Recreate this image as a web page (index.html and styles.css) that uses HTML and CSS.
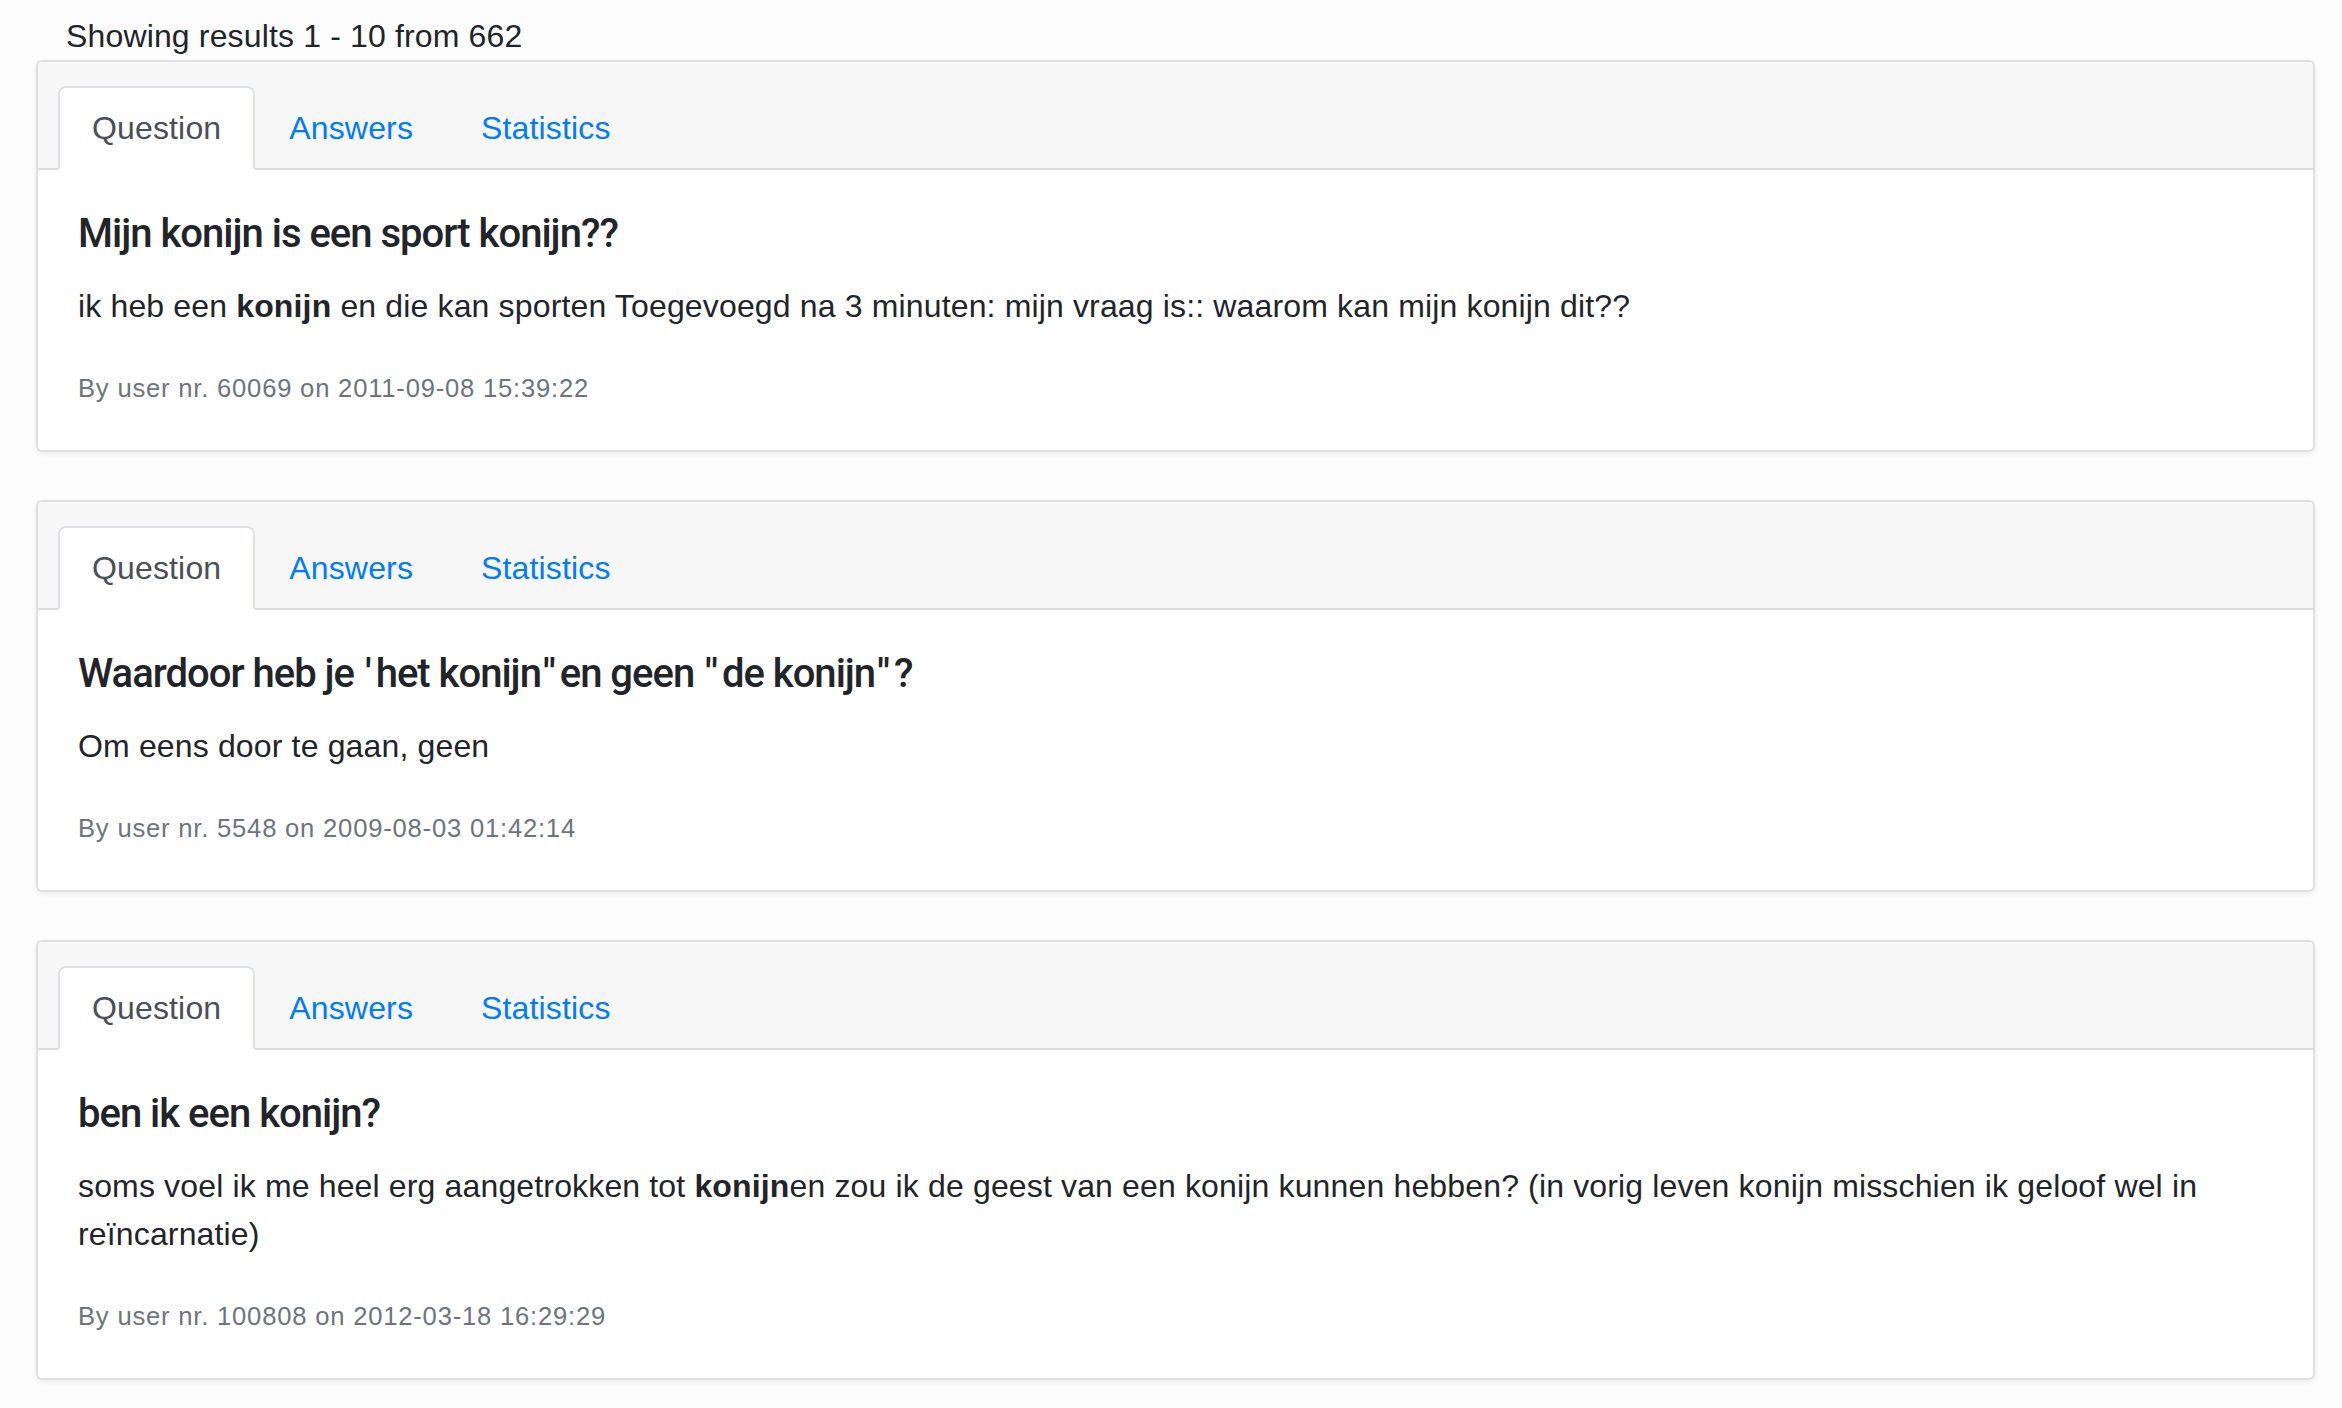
FILE: index.html
```html
<!DOCTYPE html>
<html lang="nl">
<head>
<meta charset="utf-8">
<title>Results</title>
<link rel="stylesheet" href="styles.css">
</head>
<body>
<div class="page">
  <p class="summary">Showing results 1 - 10 from 662</p>

  <div class="card">
    <div class="card-header">
      <ul class="tabs">
        <li><a class="tab active">Question</a></li>
        <li><a class="tab">Answers</a></li>
        <li><a class="tab">Statistics</a></li>
      </ul>
    </div>
    <div class="card-body">
      <h5 class="card-title">Mijn konijn is een sport konijn??</h5>
      <p class="card-text">ik heb een <b>konijn</b> en die kan sporten Toegevoegd na 3 minuten: mijn vraag is:: waarom kan mijn konijn dit??</p>
      <p class="meta"><small>By user nr. 60069 on 2011-09-08 15:39:22</small></p>
    </div>
  </div>

  <div class="card">
    <div class="card-header">
      <ul class="tabs">
        <li><a class="tab active">Question</a></li>
        <li><a class="tab">Answers</a></li>
        <li><a class="tab">Statistics</a></li>
      </ul>
    </div>
    <div class="card-body">
      <h5 class="card-title">Waardoor heb je <span class="q">'</span>het konijn<span class="q">''</span>en geen <span class="q">''</span>de konijn<span class="q">''</span>?</h5>
      <p class="card-text">Om eens door te gaan, geen</p>
      <p class="meta"><small>By user nr. 5548 on 2009-08-03 01:42:14</small></p>
    </div>
  </div>

  <div class="card">
    <div class="card-header">
      <ul class="tabs">
        <li><a class="tab active">Question</a></li>
        <li><a class="tab">Answers</a></li>
        <li><a class="tab">Statistics</a></li>
      </ul>
    </div>
    <div class="card-body">
      <h5 class="card-title">ben ik een konijn?</h5>
      <p class="card-text">soms voel ik me heel erg aangetrokken tot <b>konijn</b>en zou ik de geest van een konijn kunnen hebben? (in vorig leven konijn misschien ik geloof wel in reïncarnatie)</p>
      <p class="meta"><small>By user nr. 100808 on 2012-03-18 16:29:29</small></p>
    </div>
  </div>
</div>
</body>
</html>
```

FILE: styles.css
```css
html, body {
  margin: 0;
  padding: 0;
  background: #fdfdfd;
}

body {
  font-family: "Liberation Sans", Arial, sans-serif;
  font-size: 32px;
  line-height: 48px;
  letter-spacing: 0.15px;
  color: #212529;
}

.page {
  padding: 12px 27px 0 36px;
}

.summary {
  margin: 0 0 0 30px;
  color: #212529;
}

.card {
  background: #fff;
  border: 2px solid #dedede;
  border-radius: 6px;
  box-shadow: 0 2px 6px rgba(0, 0, 0, 0.08);
  margin-bottom: 48px;
  overflow: hidden;
}

.card-header {
  background: #f7f7f7;
  border-bottom: 2px solid #dcdcdc;
  padding: 24px 40px 0 20px;
}

.tabs {
  display: flex;
  list-style: none;
  margin: 0 0 -2px 0;
  padding: 0;
}

.tab {
  display: block;
  padding: 16px 32px;
  border: 2px solid transparent;
  border-radius: 8px 8px 0 0;
  color: #007bff;
  text-decoration: none;
}

.tab.active {
  color: #495057;
  background: #fff;
  border-color: #dee2e6 #dee2e6 #fff;
}

.card-body {
  padding: 40px;
}

.card-title {
  margin: 0 0 24px 0;
  font-family: Roboto, "Liberation Sans", sans-serif;
  font-size: 40px;
  font-weight: 500;
  line-height: 48px;
  letter-spacing: -1px;
  color: #212529;
}

.card-title .q {
  letter-spacing: 1px;
  padding: 0 3px 0 2px;
}

.card-text {
  margin: 0 0 32px 0;
}

.card-text b {
  font-weight: 700;
}

.meta {
  margin: 0;
  height: 48px;
  color: #6c757d;
}

.meta small {
  font-size: 25.6px;
  line-height: 38px;
  letter-spacing: 0.8px;
}
```
